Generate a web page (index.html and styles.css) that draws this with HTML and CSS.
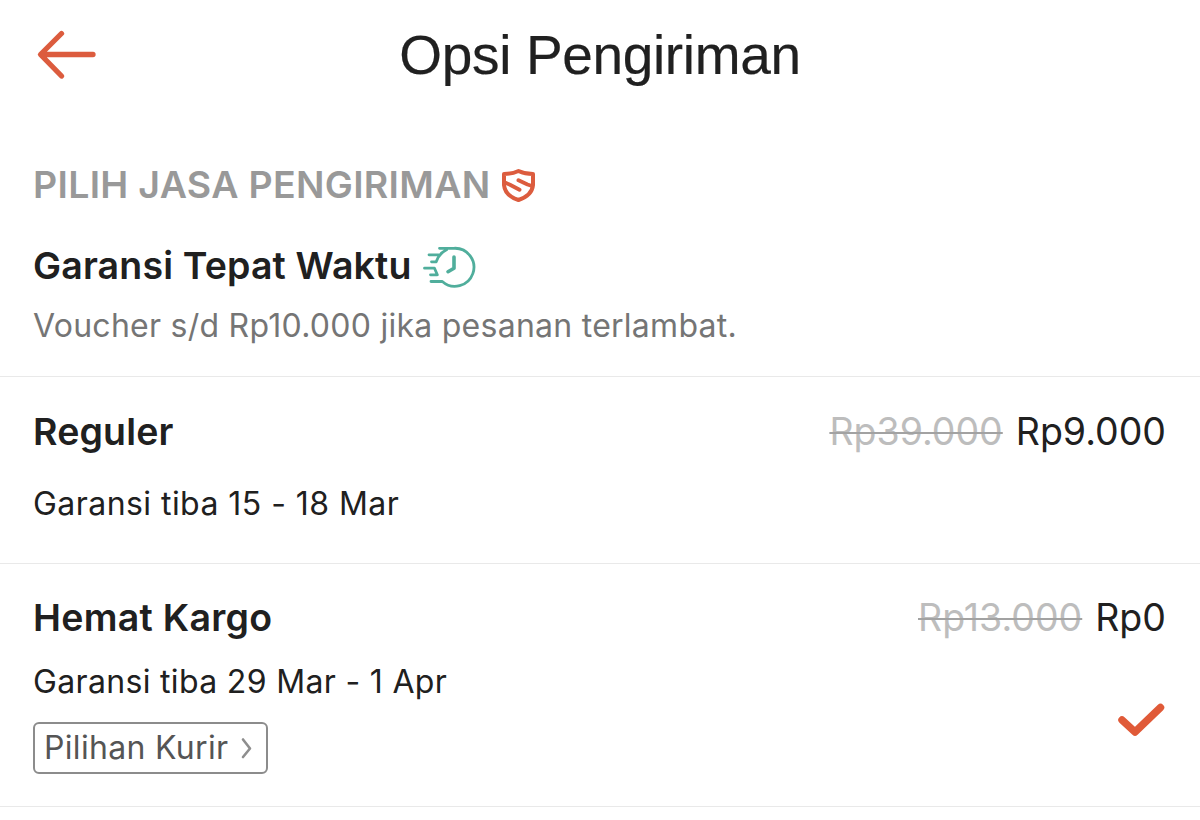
FILE: index.html
```html
<!DOCTYPE html>
<html lang="id">
<head>
<meta charset="utf-8">
<title>Opsi Pengiriman</title>
<link rel="stylesheet" href="styles.css">
</head>
<body>
<header class="header">
  <svg class="back" width="64" height="56" viewBox="0 0 64 56"><path d="M27.500 6.500 6.500 27.500 27.500 49M7 27.500H59" /></svg>
  <h1 class="title">Opsi Pengiriman</h1>
</header>
<main>
  <section class="intro">
    <div class="line">
      <h2 class="caption">PILIH JASA PENGIRIMAN</h2>
      <svg class="shield" width="40" height="40" viewBox="0 0 40 40"><path class="shield-edge" d="M20.500 6Q27 9 35 9V20Q34 30.500 20.500 35Q7 30.500 6 20V9Q14 9 20.500 6Z"/><path class="shield-s" d="M34 21 29.500 19.500 20.500 15.200M7 17.500 12 19.800 21.500 24.800"/></svg>
    </div>
    <div class="line line-guarantee">
      <h3 class="name guarantee">Garansi Tepat Waktu</h3>
      <svg class="clock" width="58" height="48" viewBox="0 0 58 48"><path d="M18.500 5.300H33A19 19 0 1 1 21.300 38.500H10M8 11.800H17.500M10.500 18.800H15.200Q18 10.500 25.500 6.800M3.500 25.200H13.500L16.300 31.800H9.500"/><path class="hands" d="M33 14V25.300L27 28.700"/></svg>
    </div>
    <p class="note">Voucher s/d Rp10.000 jika pesanan terlambat.</p>
  </section>
  <section class="option option-regular">
    <div class="row">
      <h3 class="name reguler">Reguler</h3>
      <div class="prices"><s class="old">Rp39.000</s><span class="price">Rp9.000</span></div>
    </div>
    <p class="eta">Garansi tiba 15 - 18 Mar</p>
  </section>
  <section class="option option-cargo">
    <div class="row">
      <h3 class="name hemat">Hemat Kargo</h3>
      <div class="prices"><s class="old">Rp13.000</s><span class="price">Rp0</span></div>
    </div>
    <div class="row row-details">
      <div>
        <p class="eta eta-cargo">Garansi tiba 29 Mar - 1 Apr</p>
        <button class="courier"><span>Pilihan Kurir</span><svg width="12" height="22" viewBox="0 0 12 22"><path d="M2 2.500 9 11.500 2 20"/></svg></button>
      </div>
      <svg class="check" width="48" height="36" viewBox="0 0 48 36"><path d="M4 19 17 31 42.500 6.500"/></svg>
    </div>
  </section>
</main>
</body>
</html>
```
FILE: styles.css
```css
* { box-sizing: border-box; }
body { margin: 0; background: #fff; color: #202020; font-family: Inter, "Liberation Sans", sans-serif; }
h1, h2, h3, p { margin: 0; white-space: nowrap; }
svg { display: block; flex: none; fill: none; stroke-linecap: round; stroke-linejoin: round; }
.header { height: 160px; padding: 24px 34px 0; display: grid; grid-template-columns: 64px 1fr 64px; align-items: start; }
.back { margin-top: 3px; stroke: #dc5c3e; stroke-width: 5.300; }
.title { text-align: center; font: 400 55px/62px "Liberation Sans", Arial, sans-serif; letter-spacing: -0.350px; -webkit-text-stroke: 0.200px #202020; }
.intro { height: 217px; padding: 0 34px 0 33px; border-bottom: 1px solid #e9e9e9; }
.line { height: 50px; display: flex; align-items: center; }
.caption { color: #999; font-size: 37.500px; line-height: 50px; font-weight: 600; letter-spacing: 0.300px; }
.shield { margin-left: 7px; }
.shield-edge { stroke: #dc5c3e; stroke-width: 4; }
.shield-s { stroke: #dc5c3e; stroke-width: 3.900; }
.line-guarantee { margin-top: 31px; }
.name { font-size: 37.500px; line-height: 50px; font-weight: 600; letter-spacing: 0.150px; }
.hemat { letter-spacing: 0.270px; }
.clock { margin: 2px 0 0 9px; stroke: #50ae9c; stroke-width: 2.800; }
.hands { stroke-width: 3.600; }
.note { margin-top: 15px; color: #757575; font-size: 32px; line-height: 40px; letter-spacing: 0.260px; }
.option { padding: 0 34px 0 33px; border-bottom: 1px solid #e9e9e9; }
.option-regular { height: 187px; padding-top: 30px; }
.option-cargo { height: 243px; padding-top: 29px; }
.row { display: flex; justify-content: space-between; align-items: flex-start; }
.prices { display: flex; gap: 13px; font-size: 37.500px; line-height: 50px; }
.old { color: #bdbdbd; text-decoration: line-through #a2a2a2 2px; }
.eta { font-size: 32px; line-height: 40px; letter-spacing: 0.450px; }
.eta-cargo { letter-spacing: 0.330px; }
.option-regular .eta { margin-top: 27px; }
.row-details { padding-top: 19px; }
.courier { display: flex; align-items: center; gap: 13px; width: 235px; height: 52px; margin: 20px 0 0; padding: 0 0 0 9px; border: 2px solid #8c8c8c; border-radius: 6px; background: #fff; color: #555; font: 400 32px/40px Inter, sans-serif; letter-spacing: 0.320px; }
.courier svg { stroke: #8e8e8e; stroke-width: 2.600; }
.check { margin-top: 39px; stroke: #e05a38; stroke-width: 7.500; }
```
